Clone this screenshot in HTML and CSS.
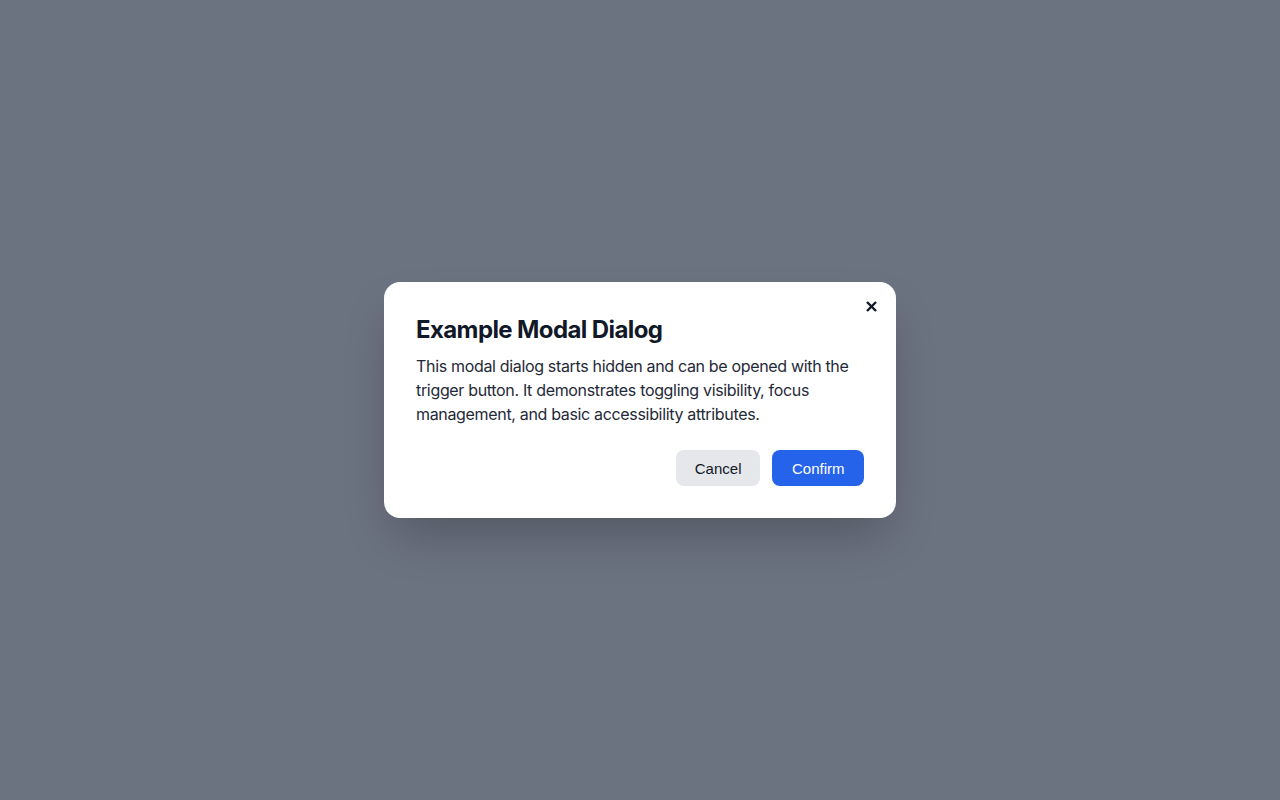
FILE: index.html
```html
<!DOCTYPE html>
<html lang="en">
<head>
<meta charset="utf-8">
<title>Modal</title>
<link rel="stylesheet" href="styles.css">
</head>
<body>
<div class="overlay">
  <div class="modal" role="dialog" aria-modal="true" aria-labelledby="modal-title">
    <button class="close" aria-label="Close">
      <svg width="11" height="11" viewBox="0 0 11 11"><path d="M1 1L10 10M10 1L1 10" stroke="#111827" stroke-width="2.4" stroke-linecap="butt"/></svg>
    </button>
    <h2 id="modal-title" class="title">Example Modal Dialog</h2>
    <p class="text">This modal dialog starts hidden and can be opened with the trigger button. It demonstrates toggling visibility, focus management, and basic accessibility attributes.</p>
    <div class="actions">
      <button class="btn btn-cancel">Cancel</button>
      <button class="btn btn-confirm">Confirm</button>
    </div>
  </div>
</div>
</body>
</html>
```
FILE: styles.css
```css
html, body {
  margin: 0;
  padding: 0;
  height: 100%;
}
body {
  background: #6b7280;
  font-family: Inter, "Noto Sans", sans-serif;
}
.overlay {
  height: 100%;
  display: flex;
  align-items: center;
  justify-content: center;
}
.modal {
  position: relative;
  box-sizing: border-box;
  width: 512px;
  background: #ffffff;
  border-radius: 16px;
  padding: 32px;
  box-shadow: 0 25px 50px -12px rgba(0,0,0,0.25);
}
.close {
  position: absolute;
  top: 13px;
  right: 14px;
  width: 22px;
  height: 22px;
  padding: 0;
  border: 0;
  background: transparent;
  display: flex;
  align-items: center;
  justify-content: center;
  cursor: pointer;
}
.title {
  margin: 0 0 8px;
  font-size: 24px;
  line-height: 32px;
  font-weight: 700;
  letter-spacing: -0.6px;
  color: #111827;
}
.text {
  margin: 0;
  font-size: 16px;
  line-height: 24px;
  letter-spacing: -0.33px;
  color: #1f2937;
}
.actions {
  margin-top: 24px;
  display: flex;
  justify-content: flex-end;
  gap: 12px;
}
.btn {
  height: 36px;
  padding: 0 19px;
  border: 0;
  border-radius: 8px;
  font-family: "Liberation Sans", Arial, sans-serif;
  font-size: 15px;
  cursor: pointer;
}
.btn-cancel {
  background: #e5e7eb;
  color: #111827;
}
.btn-confirm {
  padding: 0 19.5px;
  background: #2563eb;
  color: #ffffff;
}
```
